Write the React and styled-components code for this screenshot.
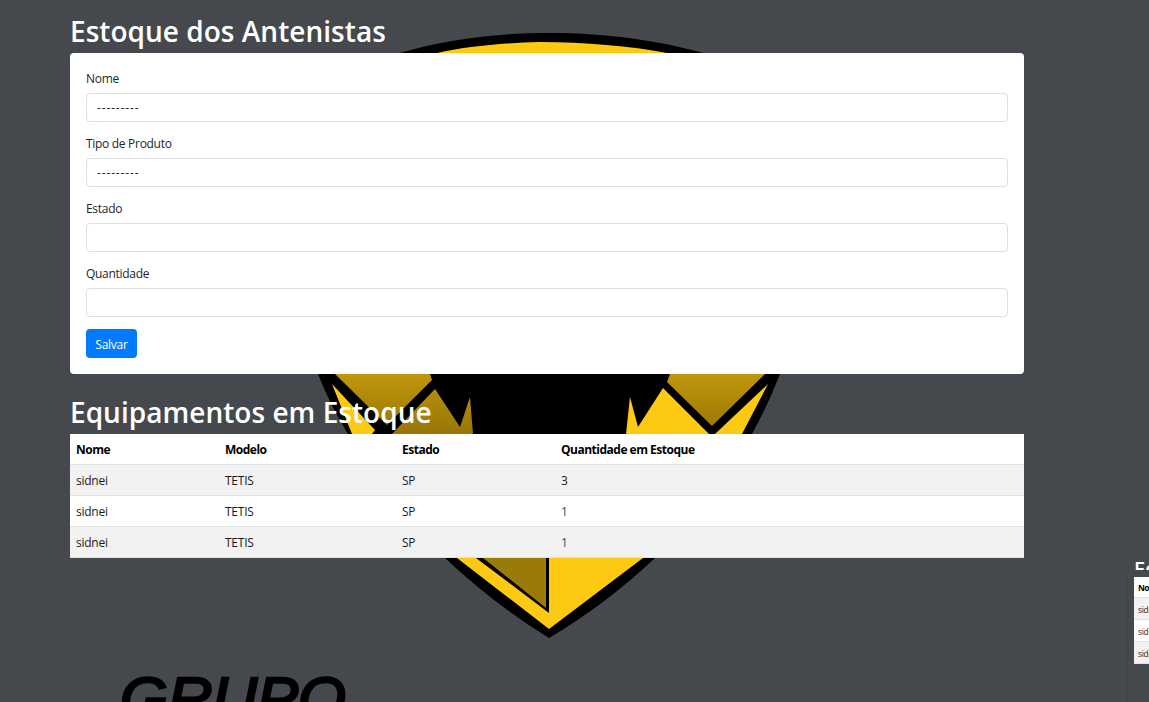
import React from "react";
import styled, { createGlobalStyle } from "styled-components";

const GlobalStyle = createGlobalStyle`
  html, body {
    margin: 0;
    padding: 0;
    background: #45494e;
  }
  body {
    font-family: "Open Sans", "Noto Sans", sans-serif;
    font-size: 12px;
    line-height: 18px;
    color: #212529;
  }
  * {
    box-sizing: border-box;
  }
`;

const rows = [
  { nome: "sidnei", modelo: "TETIS", estado: "SP", quantidade: 3 },
  { nome: "sidnei", modelo: "TETIS", estado: "SP", quantidade: 1 },
  { nome: "sidnei", modelo: "TETIS", estado: "SP", quantidade: 1 },
];

function Watermark() {
  return (
    <WatermarkLayer viewBox="0 0 1149 702" width="1149" height="702">
      <defs>
        <linearGradient id="gold" x1="0" y1="374" x2="0" y2="434" gradientUnits="userSpaceOnUse">
          <stop offset="0" stopColor="#c0960c" />
          <stop offset="1" stopColor="#987607" />
        </linearGradient>
      </defs>
      <path
        d="M549 33 C490 33 440 41 400 53 L300 90 L270 250 Q285 310 318 374 Q330 405 348 434 L445 558 Q495 605 549 638 Q605 605 655 558 L752 434 Q768 405 780 374 Q815 310 830 250 L800 90 L703 53 C660 41 610 33 549 33 Z"
        fill="#000"
      />
      <path d="M540 42 C500 43 465 47 437 53 L667 53 C630 46 585 42 540 42 Z" fill="#fdc913" />
      <path d="M335 374 L430 374 L432 380 L387 425 Z" fill="url(#gold)" />
      <path d="M332 384 L375 430 L372 434 L352 434 Z" fill="#fdc913" />
      <path d="M435 389 L460 427 L470 397 L473 434 L392 434 Z" fill="url(#gold)" />
      <path d="M663 388 L638 427 L630 397 L626 434 L709 434 Z" fill="#fdc913" />
      <path d="M670 374 L765 374 L712 426 L667 382 Z" fill="url(#gold)" />
      <path d="M768 384 L715 434 L742 434 Z" fill="#fdc913" />
      <path d="M457 558 L549 629 L643 558 Z" fill="#fdc913" />
      <path d="M476 558 L549 613 L549 558 Z" fill="#000" />
      <path d="M483 558 L546 608 L546 558 Z" fill="#9a7a08" />
      <LogoWord x="120" y="719" textLength="226" lengthAdjust="spacingAndGlyphs">
        GRUPO
      </LogoWord>
    </WatermarkLayer>
  );
}

function Field({ label, placeholder }) {
  return (
    <FormGroup>
      <Label>{label}</Label>
      {placeholder ? (
        <Select defaultValue="">
          <option value="">{placeholder}</option>
        </Select>
      ) : (
        <Input type="text" />
      )}
    </FormGroup>
  );
}

function StockTable({ small }) {
  return (
    <Table $small={small}>
      <colgroup>
        <col width={small ? 60 : 149} />
        <col width={small ? 60 : 177} />
        <col width={small ? 60 : 159} />
        <col />
      </colgroup>
      <thead>
        <tr>
          <Th $small={small}>Nome</Th>
          <Th $small={small}>Modelo</Th>
          <Th $small={small}>Estado</Th>
          <Th $small={small}>Quantidade em Estoque</Th>
        </tr>
      </thead>
      <tbody>
        {rows.map((row, i) => (
          <Row key={i} $striped={i !== 1}>
            <Td $small={small}>{row.nome}</Td>
            <Td $small={small}>{row.modelo}</Td>
            <Td $small={small}>{row.estado}</Td>
            <Td $small={small} $teal={row.quantidade === 1}>
              {row.quantidade}
            </Td>
          </Row>
        ))}
      </tbody>
    </Table>
  );
}

export default function App() {
  return (
    <Page>
      <GlobalStyle />
      <Watermark />
      <Content>
        <Title>Estoque dos Antenistas</Title>
        <Card>
          <Field label="Nome" placeholder="---------" />
          <Field label="Tipo de Produto" placeholder="---------" />
          <Field label="Estado" />
          <Field label="Quantidade" />
          <SaveButton type="button">Salvar</SaveButton>
        </Card>
        <SectionTitle>Equipamentos em Estoque</SectionTitle>
        <StockTable />
      </Content>
      <Preview>
        <PreviewTitle>Equipamentos em Estoque</PreviewTitle>
        <PreviewBody>
          <StockTable small />
        </PreviewBody>
      </Preview>
    </Page>
  );
}

const Page = styled.div`
  position: relative;
  width: 1149px;
  height: 702px;
  overflow: hidden;
  background: #45494e;
`;

const WatermarkLayer = styled.svg`
  position: absolute;
  left: 0;
  top: 0;
`;

const LogoWord = styled.text`
  font-family: "Liberation Sans", sans-serif;
  font-style: italic;
  font-weight: 400;
  font-size: 60px;
  fill: #000;
  stroke: #000;
  stroke-width: 2.4px;
`;

const Content = styled.main`
  position: relative;
  width: 954px;
  margin-left: 70px;
  padding-top: 14px;
`;

const Title = styled.h1`
  margin: 0 0 5px;
  font-size: 28px;
  line-height: 34px;
  font-weight: 600;
  letter-spacing: 0.03px;
  color: #fff;
`;

const SectionTitle = styled(Title)`
  margin-top: 21px;
`;

const Card = styled.form`
  background: #fff;
  border-radius: 4px;
  padding: 16px;
`;

const FormGroup = styled.div`
  margin-bottom: 12px;
`;

const Label = styled.label`
  display: block;
  height: 18px;
  margin-bottom: 6px;
  padding-top: 1px;
  letter-spacing: -0.3px;
`;

const Input = styled.input`
  display: block;
  width: 100%;
  height: 29px;
  padding: 0 10px;
  border: 1px solid #dcdfe4;
  border-radius: 4px;
  background: #fff;
  font: inherit;
  color: #495057;
  outline: none;
`;

const Select = styled(Input).attrs({ as: "select" })`
  appearance: none;
  color: #212529;
  letter-spacing: 0.85px;
`;

const SaveButton = styled.button`
  display: block;
  width: 51px;
  height: 29px;
  padding: 2px 0 0;
  border: 0;
  border-radius: 4px;
  background: #007bff;
  color: #fff;
  font: inherit;
  letter-spacing: -0.25px;
`;

const Table = styled.table`
  width: 100%;
  border-collapse: separate;
  border-spacing: 0;
  table-layout: fixed;
  background: #fff;
  color: #000;
  font-size: ${({ $small }) => ($small ? "8.4px" : "12px")};
  line-height: ${({ $small }) => ($small ? "13px" : "18px")};
  letter-spacing: -0.25px;
`;

const Th = styled.th`
  height: ${({ $small }) => ($small ? "21px" : "31px")};
  padding: ${({ $small }) => ($small ? "1px 4px 0" : "2px 6px 0")};
  text-align: left;
  font-weight: 700;
  letter-spacing: -0.5px;
  white-space: nowrap;
  border-bottom: 1px solid #dee2e6;
`;

const Row = styled.tr`
  background: ${({ $striped }) => ($striped ? "#f2f2f2" : "#fff")};
`;

const Td = styled.td`
  height: ${({ $small }) => ($small ? "22px" : "31px")};
  padding: ${({ $small }) => ($small ? "1px 4px 0" : "2px 6px 0")};
  border-bottom: 1px solid #dee2e6;
  color: ${({ $teal }) => ($teal ? "#0f5575" : "#1a1a1a")};
`;

const Preview = styled.aside`
  position: absolute;
  left: 1127px;
  top: 552px;
  width: 300px;
  height: 150px;
  overflow: hidden;
`;

const PreviewTitle = styled.h2`
  margin: 0 0 0 7px;
  height: 18px;
  padding-top: 5px;
  font-size: 20px;
  line-height: 24px;
  font-weight: 600;
  white-space: nowrap;
  color: #fff;
  overflow: hidden;
`;

const PreviewBody = styled.div`
  height: 132px;
  padding: 7px 0 0 6px;
  background: #45494e;
  border-left: 1px solid #404449;
`;
